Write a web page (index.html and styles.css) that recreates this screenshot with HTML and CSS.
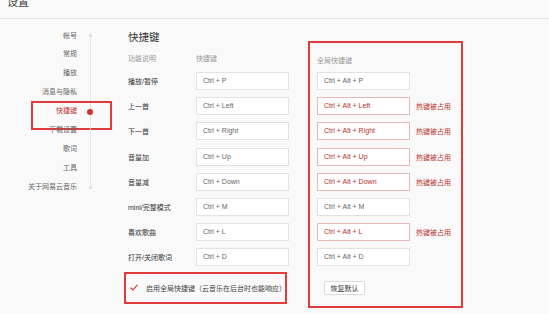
FILE: index.html
```html
<!DOCTYPE html>
<html lang="zh-CN">
<head>
<meta charset="utf-8">
<title>设置</title>
<link rel="stylesheet" href="styles.css">
</head>
<body>
<div class="app">
  <header class="topbar"><h1 class="page-title">设置</h1></header>
  <div class="main">
    <nav class="nav">
      <div class="nav-item first"><span class="nav-label">帐号</span><span class="nav-mark"><i class="end-dot"></i></span></div>
      <div class="nav-item"><span class="nav-label">常规</span><span class="nav-mark"></span></div>
      <div class="nav-item"><span class="nav-label">播放</span><span class="nav-mark"></span></div>
      <div class="nav-item"><span class="nav-label">消息与隐私</span><span class="nav-mark"></span></div>
      <div class="nav-item active"><span class="nav-label">快捷键</span><span class="nav-mark"><i class="dot"></i></span></div>
      <div class="nav-item"><span class="nav-label">下载设置</span><span class="nav-mark"></span></div>
      <div class="nav-item"><span class="nav-label">歌词</span><span class="nav-mark"></span></div>
      <div class="nav-item"><span class="nav-label">工具</span><span class="nav-mark"></span></div>
      <div class="nav-item last"><span class="nav-label">关于网易云音乐</span><span class="nav-mark"><i class="end-dot"></i></span></div>
    </nav>
    <section class="keys">
      <div class="local">
        <h2 class="section-title">快捷键</h2>
        <div class="col-head"><span class="fn">功能说明</span><span>快捷键</span></div>
        <div class="row"><span class="fn">播放/暂停</span><span class="key">Ctrl + P</span></div>
        <div class="row"><span class="fn">上一首</span><span class="key">Ctrl + Left</span></div>
        <div class="row"><span class="fn">下一首</span><span class="key">Ctrl + Right</span></div>
        <div class="row"><span class="fn">音量加</span><span class="key">Ctrl + Up</span></div>
        <div class="row"><span class="fn">音量减</span><span class="key">Ctrl + Down</span></div>
        <div class="row"><span class="fn">mini/完整模式</span><span class="key">Ctrl + M</span></div>
        <div class="row"><span class="fn">喜欢歌曲</span><span class="key">Ctrl + L</span></div>
        <div class="row"><span class="fn">打开/关闭歌词</span><span class="key">Ctrl + D</span></div>
        <div class="global-toggle">
          <svg class="check" width="8" height="7" viewBox="0 0 8 7"><polyline points="0.6,3.6 2.9,6 7.4,0.8" fill="none" stroke="#c9302c" stroke-width="1.1"/></svg>
          <span>启用全局快捷键（云音乐在后台时也能响应）</span>
        </div>
      </div>
      <div class="global">
        <div class="col-head">全局快捷键</div>
        <div class="row"><span class="key">Ctrl + Alt + P</span></div>
        <div class="row conflict"><span class="key">Ctrl + Alt + Left</span><span class="warn">热键被占用</span></div>
        <div class="row conflict"><span class="key">Ctrl + Alt + Right</span><span class="warn">热键被占用</span></div>
        <div class="row conflict"><span class="key">Ctrl + Alt + Up</span><span class="warn">热键被占用</span></div>
        <div class="row conflict"><span class="key">Ctrl + Alt + Down</span><span class="warn">热键被占用</span></div>
        <div class="row"><span class="key">Ctrl + Alt + M</span></div>
        <div class="row conflict"><span class="key">Ctrl + Alt + L</span><span class="warn">热键被占用</span></div>
        <div class="row"><span class="key">Ctrl + Alt + D</span></div>
        <button class="reset">恢复默认</button>
      </div>
    </section>
  </div>
</div>
</body>
</html>
```

FILE: styles.css
```css
* { box-sizing: border-box; }
html, body { margin: 0; padding: 0; }
body {
  background: #f9f9f9;
  font-family: "Liberation Sans", "Noto Sans CJK SC", sans-serif;
  font-size: 7px;
  color: #333;
  width: 549px;
  height: 314px;
  overflow: hidden;
}
.topbar {
  height: 19px;
  border-bottom: 1px solid #e6e6e6;
  padding-left: 7px;
  overflow: hidden;
}
.page-title {
  margin: -3px 0 0 0;
  font-size: 11px;
  line-height: 11px;
  font-weight: normal;
  color: #444;
}
.main { display: flex; }

/* sidebar */
.nav {
  width: 128px;
  flex: none;
  padding-top: 7.5px;
}
.nav-item {
  display: flex;
  height: 18.9px;
  align-items: center;
  position: relative;
}
.nav-label {
  width: 77px;
  text-align: right;
  color: #666;
  line-height: 18.9px;
}
.nav-mark {
  width: 26px;
  height: 100%;
  position: relative;
  background: linear-gradient(#e8e3e3, #e8e3e3) no-repeat center / 1px 100%;
  display: flex;
  align-items: center;
  justify-content: center;
}
.first .nav-mark { background-size: 1px 50%; background-position: center bottom; }
.last .nav-mark { background-size: 1px 50%; background-position: center top; }
.end-dot {
  width: 3px; height: 3px; border-radius: 50%;
  background: #ddd;
}
.dot {
  width: 6px; height: 6px; border-radius: 50%;
  background: #d0312d;
}
.active .nav-label { color: #c2332f; }
.active::after {
  content: "";
  position: absolute;
  left: 31px;
  width: 77px;
  top: -1.5px;
  height: 25px;
  border: 2px solid #e23b3b;
}

/* content */
.keys { display: flex; align-items: flex-start; }
.local {
  width: 180px;
  padding-top: 11px;
}
.section-title {
  margin: 0;
  font-size: 10.5px;
  line-height: 14px;
  font-weight: normal;
  color: #333;
}
.col-head {
  display: flex;
  line-height: 12px;
  height: 12px;
  color: #999;
  margin-top: 9px;
}
.fn { width: 68px; flex: none; }
.row {
  display: flex;
  align-items: center;
  height: 18px;
  margin-top: 7.2px;
}
.col-head + .row { margin-top: 7px; }
.key {
  width: 93px;
  height: 18px;
  background: #fff;
  border: 1px solid #e3e3e3;
  color: #666;
  line-height: 16px;
  padding-left: 6px;
  flex: none;
}
.global-toggle {
  margin: 5.6px 0 0 -4px;
  width: 163px;
  height: 32px;
  border: 2px solid #e23b3b;
  display: flex;
  align-items: center;
  padding-left: 4px;
  color: #444;
}
.check { margin-right: 8px; flex: none; }

.global {
  margin-top: 22px;
  width: 155px;
  border: 2px solid #e23b3b;
  padding: 12px 0 11px 7px;
}
.global .col-head { margin-top: 0; }
.global .col-head + .row { margin-top: 5px; }
.conflict .key {
  border-color: #e6b9b9;
  color: #b8302c;
}
.warn {
  margin-left: 6px;
  color: #b8302c;
}
.reset {
  display: block;
  margin: 14.6px 0 0 7px;
  width: 41px;
  height: 14px;
  padding: 0;
  background: #fff;
  border: 1px solid #dcdcdc;
  border-radius: 1px;
  font-family: inherit;
  font-size: 7px;
  color: #333;
}
```
